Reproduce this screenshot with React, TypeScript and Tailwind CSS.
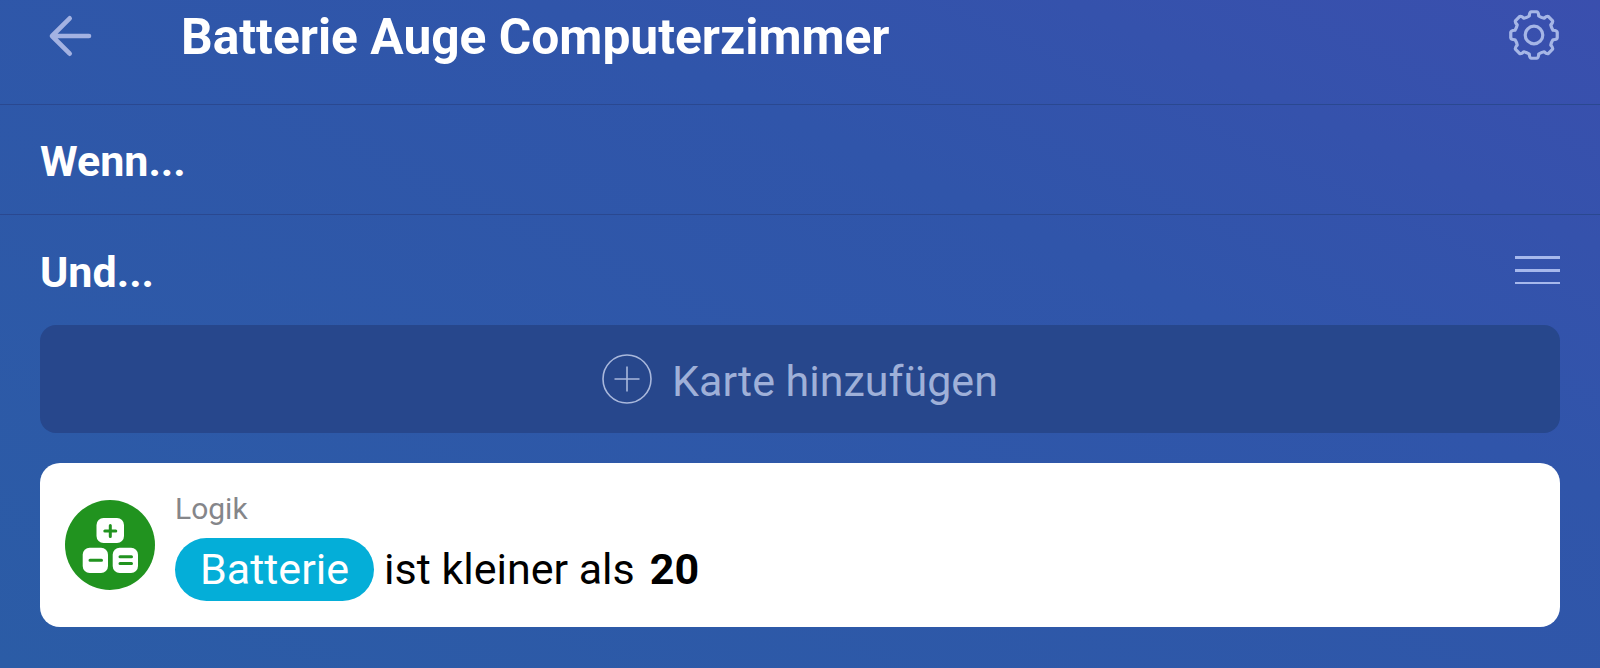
const gearPath = (() => {
  const n = 8, cx = 30, cy = 30, ro = 23.4, ri = 19.6;
  const pts: string[] = [];
  for (let i = 0; i < n; i++) {
    const a = (i * 2 * Math.PI) / n - Math.PI / 2;
    const w = Math.PI / n;
    const p = (r: number, t: number) => `${(cx + r * Math.cos(t)).toFixed(2)} ${(cy + r * Math.sin(t)).toFixed(2)}`;
    pts.push(`${i === 0 ? "M" : "L"}${p(ri, a - w * 0.62)}`);
    pts.push(`Q${p(ro, a - w * 0.5)} ${p(ro, a - w * 0.3)}`);
    pts.push(`L${p(ro, a + w * 0.3)}`);
    pts.push(`Q${p(ro, a + w * 0.5)} ${p(ri, a + w * 0.62)}`);
    pts.push(`Q${p(ri - 0.8, a + w)} ${p(ri, a + w * 1.38)}`);
  }
  return pts.join(" ") + "Z";
})();

export default function App() {
  return (
    <div className="h-[668px] w-full overflow-hidden bg-[linear-gradient(205deg,#3a4fae_0%,#3055aa_35%,#2b5ca6_100%)] font-['Roboto',sans-serif]">
      <header className="flex h-[105px] items-start border-b border-[#2a4890]">
        <div className="flex h-[71px] w-[181px] shrink-0 items-center pl-[48px]">
          <svg width="44" height="44" viewBox="0 0 44 44" fill="none" stroke="#a3b2e2" strokeWidth="4.6">
            <path d="M41 22H4.5M21.7 4.3 4 22l17.7 17.7" strokeLinecap="round" strokeLinejoin="round" />
          </svg>
        </div>
        <h1 className="h-[76px] flex-1 text-[49.7px] leading-[75px] font-bold whitespace-nowrap text-white">Batterie Auge Computerzimmer</h1>
        <div className="flex h-[70px] items-center pr-[36px]">
          <svg width="60" height="60" viewBox="0 0 60 60" fill="none" stroke="#a6b6e6" strokeWidth="3.2" strokeLinejoin="round">
            <path d={gearPath} />
            <circle cx="30" cy="30" r="8.8" />
          </svg>
        </div>
      </header>
      <section className="flex h-[110px] items-center border-b border-[#2a4890] px-[40px] pt-[4px]">
        <h2 className="text-[43px] leading-none font-bold text-white">Wenn...</h2>
      </section>
      <section className="px-[40px]">
        <div className="flex h-[110px] items-center justify-between">
          <h2 className="pt-[4px] text-[43px] leading-none font-bold text-white">Und...</h2>
          <div className="flex w-[45px] flex-col gap-[10px]">
            <div className="h-[3px] bg-[#a6b8ec]" />
            <div className="h-[3px] bg-[#a6b8ec]" />
            <div className="h-[2px] bg-[#a6b8ec]" />
          </div>
        </div>
        <button className="flex h-[108px] w-full items-center justify-center gap-[20px] rounded-[16px] bg-[#27478c] text-[43px] text-[#9fb0d8]">
          <svg width="50" height="50" viewBox="0 0 50 50" fill="none" stroke="#a9b8dc" strokeWidth="1.6">
            <circle cx="25" cy="25" r="24" />
            <path d="M25 12.5v25M12.5 25h25" />
          </svg>
          <span className="pt-[4px]">Karte hinzufügen</span>
        </button>
        <div className="mt-[30px] flex h-[164px] items-center gap-[20px] rounded-[20px] bg-white pl-[25px]">
          <svg width="90" height="90" viewBox="0 0 90 90" className="shrink-0">
            <circle cx="45" cy="45" r="45" fill="#21931f" />
            <rect x="31.5" y="18" width="27.5" height="25" rx="7" fill="#fff" />
            <rect x="17.7" y="47.7" width="25.3" height="25.3" rx="7" fill="#fff" />
            <rect x="47.7" y="47.7" width="25.3" height="25.3" rx="7" fill="#fff" />
            <path d="M45.3 25.5v11M39.8 31h11M25 60.2h11.5M55 56.8h11.5M55 63.4h11.5" stroke="#21931f" strokeWidth="3" fill="none" strokeLinecap="round" />
          </svg>
          <div className="mt-[3px] flex flex-col">
            <div className="text-[30px] leading-[34px] text-[#85868a]">Logik</div>
            <div className="mt-[11px] flex items-center text-[43px] text-black">
              <span className="flex h-[63px] w-[199px] items-center justify-center rounded-full bg-[#04aed8] text-white">Batterie</span>
              <span className="ml-[10px]">ist kleiner als</span>
              <span className="ml-[15px] font-bold">20</span>
            </div>
          </div>
        </div>
      </section>
    </div>
  );
}
